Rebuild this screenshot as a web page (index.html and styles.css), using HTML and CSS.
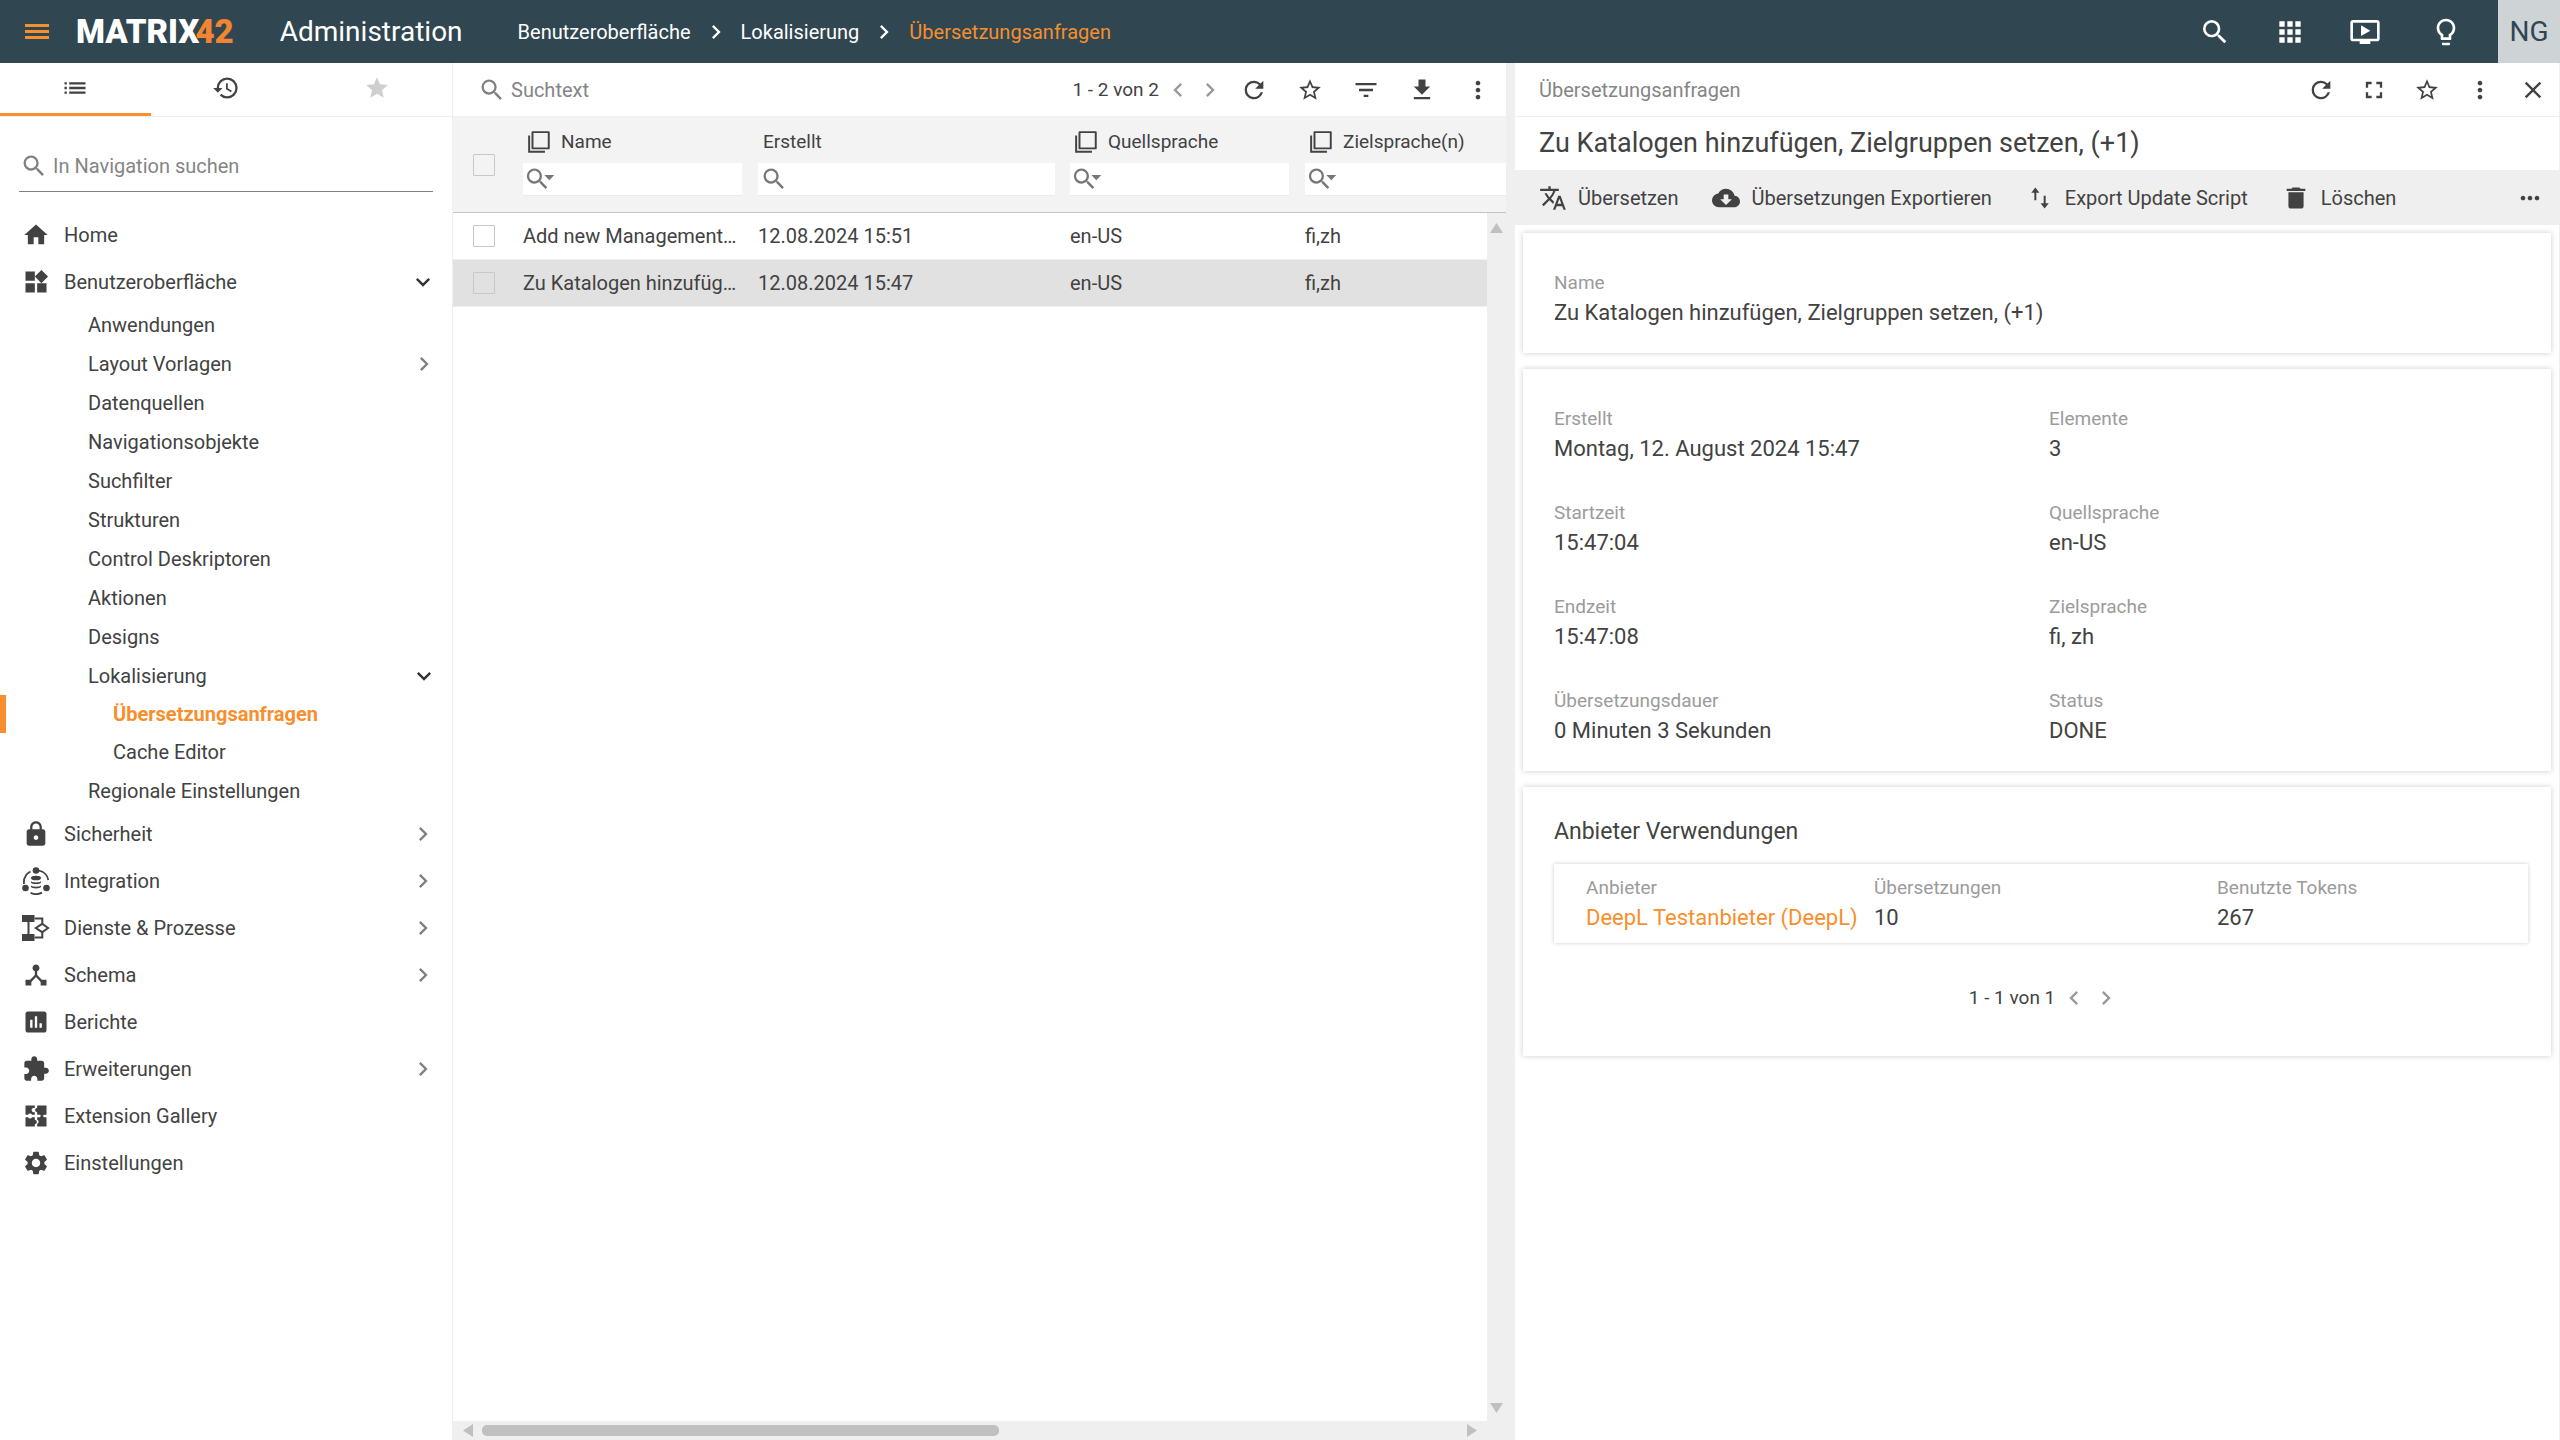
FILE: index.html
```html
<!DOCTYPE html>
<html lang="de">
<head>
<meta charset="utf-8">
<meta name="viewport" content="width=device-width, initial-scale=1">
<title>Administration – Übersetzungsanfragen</title>
<link rel="stylesheet" href="styles.css">
</head>
<body>
<svg class="sprite" aria-hidden="true">
  <symbol id="i-search" viewBox="0 0 24 24"><path d="M15.5 14h-.79l-.28-.27A6.47 6.47 0 0 0 16 9.5 6.5 6.5 0 1 0 9.5 16c1.61 0 3.09-.59 4.23-1.57l.27.28v.79l5 4.99L20.49 19l-4.99-5zm-6 0C7.01 14 5 11.99 5 9.5S7.01 5 9.5 5 14 7.01 14 9.5 11.99 14 9.5 14z"/></symbol>
  <symbol id="i-apps" viewBox="0 0 24 24"><path d="M4 8h4V4H4v4zm6 12h4v-4h-4v4zm-6 0h4v-4H4v4zm0-6h4v-4H4v4zm6 0h4v-4h-4v4zm6-10v4h4V4h-4zm-6 4h4V4h-4v4zm6 6h4v-4h-4v4zm0 6h4v-4h-4v4z"/></symbol>
  <symbol id="i-tv" viewBox="0 0 24 24"><path d="M21 3H3c-1.11 0-2 .89-2 2v12c0 1.1.89 2 2 2h5v2h8v-2h5c1.1 0 1.99-.9 1.99-2L23 5c0-1.11-.9-2-2-2zm0 14H3V5h18v12zm-5-6l-7 4V7z"/></symbol>
  <symbol id="i-bulb" viewBox="0 0 24 24"><path d="M9 21c0 .55.45 1 1 1h4c.55 0 1-.45 1-1v-1H9v1zm3-19C8.14 2 5 5.14 5 9c0 2.38 1.19 4.47 3 5.74V17c0 .55.45 1 1 1h6c.55 0 1-.45 1-1v-2.26c1.81-1.27 3-3.36 3-5.74 0-3.86-3.14-7-7-7zm2.85 11.1l-.85.6V16h-4v-2.3l-.85-.6C7.8 12.16 7 10.63 7 9c0-2.76 2.24-5 5-5s5 2.24 5 5c0 1.63-.8 3.16-2.15 4.1z"/></symbol>
  <symbol id="i-right" viewBox="0 0 24 24"><path d="M10 6L8.59 7.41 13.17 12l-4.58 4.59L10 18l6-6z"/></symbol>
  <symbol id="i-left" viewBox="0 0 24 24"><path d="M15.41 7.41L14 6l-6 6 6 6 1.41-1.41L10.83 12z"/></symbol>
  <symbol id="i-down" viewBox="0 0 24 24"><path d="M16.59 8.59L12 13.17 7.41 8.59 6 10l6 6 6-6z"/></symbol>
  <symbol id="i-list" viewBox="0 0 24 24"><path d="M3 13h2v-2H3v2zm0 4h2v-2H3v2zm0-8h2V7H3v2zm4 4h14v-2H7v2zm0 4h14v-2H7v2zM7 7v2h14V7H7z"/></symbol>
  <symbol id="i-history" viewBox="0 0 24 24"><path d="M13 3a9 9 0 0 0-9 9H1l3.89 3.89.07.14L9 12H6c0-3.87 3.13-7 7-7s7 3.13 7 7-3.13 7-7 7c-1.93 0-3.68-.79-4.94-2.06l-1.42 1.42A8.954 8.954 0 0 0 13 21a9 9 0 0 0 0-18zm-1 5v5l4.28 2.54.72-1.21-3.5-2.08V8H12z"/></symbol>
  <symbol id="i-star" viewBox="0 0 24 24"><path d="M12 17.27L18.18 21l-1.64-7.03L22 9.24l-7.19-.61L12 2 9.19 8.63 2 9.24l5.46 4.73L5.82 21z"/></symbol>
  <symbol id="i-star-o" viewBox="0 0 24 24"><path d="M22 9.24l-7.19-.62L12 2 9.19 8.63 2 9.24l5.46 4.73L5.82 21 12 17.27 18.18 21l-1.63-7.03L22 9.24zM12 15.4l-3.76 2.27 1-4.28-3.32-2.88 4.38-.38L12 6.1l1.71 4.04 4.38.38-3.32 2.88 1 4.28L12 15.4z"/></symbol>
  <symbol id="i-home" viewBox="0 0 24 24"><path d="M10 20v-6h4v6h5v-8h3L12 3 2 12h3v8z"/></symbol>
  <symbol id="i-widgets" viewBox="0 0 24 24"><path d="M13 13v8h8v-8h-8zM3 21h8v-8H3v8zM3 3v8h8V3H3zm13.66-1.31L11 7.34 16.66 13l5.66-5.66-5.66-5.65z"/></symbol>
  <symbol id="i-lock" viewBox="0 0 24 24"><path d="M18 8h-1V6c0-2.76-2.24-5-5-5S7 3.24 7 6v2H6c-1.1 0-2 .9-2 2v10c0 1.1.9 2 2 2h12c1.1 0 2-.9 2-2V10c0-1.1-.9-2-2-2zm-6 9c-1.1 0-2-.9-2-2s.9-2 2-2 2 .9 2 2-.9 2-2 2zm3.100-9H8.900V6c0-1.710 1.390-3.100 3.100-3.100s3.100 1.390 3.100 3.100v2z"/></symbol>
  <symbol id="i-integration" viewBox="0 0 28 28"><circle cx="14" cy="3.500" r="3.300"/><circle cx="3.500" cy="21" r="3.300"/><circle cx="24.500" cy="21" r="3.300"/><path d="M17 3.600A11.500 11.500 0 0 1 26.300 13M8.500 4.500A12.500 12.500 0 0 0 2 17M8.500 25.800A12.500 12.500 0 0 0 20 25.600" fill="none" stroke="currentColor" stroke-width="1.800"/><ellipse cx="14" cy="11" rx="5" ry="2.300"/><path d="M9 14.200c1.500 1.600 8.500 1.600 10 0v1.200c-.5 2.100-9.500 2.100-10 0zM9 18.600c1.500 1.600 8.500 1.600 10 0v1.200c-.5 2.100-9.500 2.100-10 0z"/></symbol>
  <symbol id="i-process" viewBox="0 0 28 28"><path d="M0 1h12.500v7H0zM0 20h12.500v7H0z"/><path d="M6.500 8v12M12.500 4.500h7.800v4.800M12.500 23.500h7.800v-4.800M13.800 14l6.400-4.200L26 14l-5.800 4.200z" fill="none" stroke="currentColor" stroke-width="2"/></symbol>
  <symbol id="i-schema" viewBox="0 0 24 24"><path d="M17 16l-4-4V8.820C14.160 8.400 15 7.300 15 6c0-1.660-1.340-3-3-3S9 4.340 9 6c0 1.300.84 2.400 2 2.820V12l-4 4H3v5h5v-3.050l4-4.200 4 4.200V21h5v-5h-4z"/></symbol>
  <symbol id="i-report" viewBox="0 0 24 24"><path d="M19 3H5c-1.100 0-2 .9-2 2v14c0 1.100.9 2 2 2h14c1.100 0 2-.9 2-2V5c0-1.100-.9-2-2-2zM9 17H7v-7h2v7zm4 0h-2V7h2v10zm4 0h-2v-4h2v4z"/></symbol>
  <symbol id="i-extension" viewBox="0 0 24 24"><path d="M20.500 11H19V7c0-1.100-.9-2-2-2h-4V3.500C13 2.120 11.880 1 10.500 1S8 2.120 8 3.500V5H4c-1.100 0-1.990.9-1.990 2v3.800H3.500c1.490 0 2.700 1.210 2.700 2.700s-1.210 2.700-2.700 2.700H2V20c0 1.100.9 2 2 2h3.800v-1.500c0-1.490 1.210-2.700 2.700-2.700 1.490 0 2.700 1.210 2.700 2.700V22H17c1.100 0 2-.9 2-2v-4h1.500c1.380 0 2.500-1.120 2.500-2.500S21.880 11 20.500 11z"/></symbol>
  <symbol id="i-gallery" viewBox="0 0 24 24"><path d="M3 3h8v2.200a1.900 1.900 0 1 0 0 3.400V11H8.600a1.900 1.900 0 0 0-3.400 0H3zM13 3h8v8h-2.200a1.900 1.900 0 0 1-3.400 0H13V8.800a2 2 0 0 1-1.800-1.900A2 2 0 0 1 13 5zM3 13h2.200a1.900 1.900 0 0 0 3.400 0H11v2.200a2 2 0 0 1 1.800 1.900A2 2 0 0 1 11 19v2H3zM13 13h2.200a1.900 1.900 0 0 1 3.600 0H21v8h-8v-2.200a1.900 1.900 0 0 0 0-3.600z"/></symbol>
  <symbol id="i-gear" viewBox="0 0 24 24"><path d="M19.140 12.940c.04-.3.060-.61.060-.94 0-.32-.02-.64-.07-.94l2.030-1.580a.49.49 0 0 0 .12-.61l-1.920-3.320a.488.488 0 0 0-.59-.22l-2.390.96c-.5-.38-1.030-.7-1.620-.94l-.36-2.540a.484.484 0 0 0-.48-.41h-3.840c-.24 0-.43.17-.47.41l-.36 2.540c-.59.24-1.130.57-1.620.94l-2.390-.96c-.22-.08-.47 0-.59.22L2.740 8.870c-.12.21-.08.47.12.61l2.030 1.580c-.05.3-.09.63-.09.94s.02.64.07.94l-2.030 1.580a.49.49 0 0 0-.12.61l1.920 3.320c.12.22.37.29.59.22l2.390-.96c.5.38 1.030.7 1.620.94l.36 2.540c.05.24.24.41.48.41h3.840c.24 0 .44-.17.47-.41l.36-2.540c.59-.24 1.130-.56 1.620-.94l2.390.96c.22.08.47 0 .59-.22l1.920-3.320c.12-.22.070-.47-.12-.61l-2.010-1.580zM12 15.600c-1.980 0-3.600-1.620-3.600-3.600s1.620-3.600 3.600-3.600 3.600 1.620 3.600 3.600-1.620 3.600-3.600 3.600z"/></symbol>
  <symbol id="i-refresh" viewBox="0 0 24 24"><path d="M17.650 6.350A7.958 7.958 0 0 0 12 4a8 8 0 1 0 7.730 10h-2.080A5.990 5.990 0 0 1 12 18c-3.310 0-6-2.690-6-6s2.690-6 6-6c1.660 0 3.140.69 4.220 1.780L13 11h7V4l-2.350 2.350z"/></symbol>
  <symbol id="i-filter" viewBox="0 0 24 24"><path d="M10 18h4v-2h-4v2zM3 6v2h18V6H3zm3 7h12v-2H6v2z"/></symbol>
  <symbol id="i-download" viewBox="0 0 24 24"><path d="M19 9h-4V3H9v6H5l7 7 7-7zM5 18v2h14v-2H5z"/></symbol>
  <symbol id="i-more" viewBox="0 0 24 24"><path d="M12 8c1.100 0 2-.9 2-2s-.9-2-2-2-2 .9-2 2 .9 2 2 2zm0 2c-1.100 0-2 .9-2 2s.9 2 2 2 2-.9 2-2-.9-2-2-2zm0 6c-1.100 0-2 .9-2 2s.9 2 2 2 2-.9 2-2-.9-2-2-2z"/></symbol>
  <symbol id="i-dots" viewBox="0 0 24 24"><path d="M6 10c-1.100 0-2 .9-2 2s.9 2 2 2 2-.9 2-2-.9-2-2-2zm12 0c-1.100 0-2 .9-2 2s.9 2 2 2 2-.9 2-2-.9-2-2-2zm-6 0c-1.100 0-2 .9-2 2s.9 2 2 2 2-.9 2-2-.9-2-2-2z"/></symbol>
  <symbol id="i-full" viewBox="0 0 24 24"><path d="M7 14H5v5h5v-2H7v-3zm-2-4h2V7h3V5H5v5zm12 7h-3v2h5v-5h-2v3zM14 5v2h3v3h2V5h-5z"/></symbol>
  <symbol id="i-close" viewBox="0 0 24 24"><path d="M19 6.410L17.590 5 12 10.590 6.410 5 5 6.410 10.590 12 5 17.590 6.410 19 12 13.410 17.590 19 19 17.590 13.410 12z"/></symbol>
  <symbol id="i-copy" viewBox="0 0 24 24"><path d="M6 2.900h15v15H6z" fill="none" stroke="currentColor" stroke-width="1.800" stroke-linejoin="round"/><path d="M2.900 6v15H17.500" fill="none" stroke="currentColor" stroke-width="1.800"/></symbol>
  <symbol id="i-searchdown" viewBox="0 0 32 24"><path d="M15.500 14h-.79l-.28-.27A6.470 6.470 0 0 0 16 9.500 6.500 6.500 0 1 0 9.500 16c1.610 0 3.090-.59 4.230-1.570l.27.28v.79l5 4.990L20.490 19l-4.990-5zm-6 0C7.010 14 5 11.990 5 9.500S7.010 5 9.500 5 14 7.010 14 9.500 11.990 14 9.500 14zM18 8.500h8.500L22.250 13z"/></symbol>
  <symbol id="i-translate" viewBox="0 0 24 24"><path d="M12.870 15.070l-2.540-2.510.03-.03A17.520 17.520 0 0 0 14.070 6H17V4h-7V2H8v2H1v1.990h11.170C11.500 7.920 10.440 9.750 9 11.350 8.070 10.320 7.300 9.190 6.690 8h-2c.73 1.630 1.730 3.170 2.980 4.560l-5.090 5.020L4 19l5-5 3.110 3.110.76-2.040zM18.500 10h-2L12 22h2l1.120-3h4.750L21 22h2l-4.500-12zm-2.620 7l1.620-4.330L19.120 17h-3.240z"/></symbol>
  <symbol id="i-cloud" viewBox="0 0 24 24"><path d="M19.350 10.040A7.490 7.490 0 0 0 12 4C9.110 4 6.600 5.640 5.350 8.040A5.994 5.994 0 0 0 0 14c0 3.310 2.690 6 6 6h13c2.760 0 5-2.240 5-5 0-2.640-2.050-4.780-4.650-4.960zM17 13l-5 5-5-5h3V9h4v4h3z"/></symbol>
  <symbol id="i-swap" viewBox="0 0 24 24"><path d="M8 5v9M16 10v9" fill="none" stroke="currentColor" stroke-width="1.700"/><path d="M4.500 7.500L8 3l3.500 4.500zM12.500 16.500L16 21l3.500-4.500z"/></symbol>
  <symbol id="i-trash" viewBox="0 0 24 24"><path d="M5.500 7v12c0 1.100.9 2 2 2h9c1.100 0 2-.9 2-2V7zM20 4h-4l-1.100-1H9.100L8 4H4v2h16z"/></symbol>
</svg>

<header class="topbar">
  <button class="burger" aria-label="Menü"><span></span><span></span><span></span></button>
  <a class="logo" href="#">MATRIX<span class="logo-num">42</span></a>
  <h1 class="app-name">Administration</h1>
  <nav class="crumbs" aria-label="Pfad">
    <a href="#">Benutzeroberfläche</a>
    <svg class="icon"><use href="#i-right"/></svg>
    <a href="#">Lokalisierung</a>
    <svg class="icon"><use href="#i-right"/></svg>
    <a class="current" href="#">Übersetzungsanfragen</a>
  </nav>
  <div class="top-actions">
    <button aria-label="Suche"><svg class="icon-lg"><use href="#i-search"/></svg></button>
    <button aria-label="Anwendungen"><svg class="icon-lg"><use href="#i-apps"/></svg></button>
    <button aria-label="Videos"><svg class="icon-lg"><use href="#i-tv"/></svg></button>
    <button class="help" aria-label="Hilfe"><svg class="icon-lg"><use href="#i-bulb"/></svg></button>
  </div>
  <button class="avatar">NG</button>
</header>

<div class="workspace">
  <aside class="sidebar">
    <div class="tabs">
      <button class="tab active" aria-label="Navigation"><svg class="icon"><use href="#i-list"/></svg></button>
      <button class="tab" aria-label="Verlauf"><svg class="icon"><use href="#i-history"/></svg></button>
      <button class="tab muted" aria-label="Favoriten"><svg class="icon-sm"><use href="#i-star"/></svg></button>
    </div>
    <label class="nav-search">
      <svg class="icon"><use href="#i-search"/></svg>
      <input type="text" placeholder="In Navigation suchen">
    </label>
    <nav class="tree" aria-label="Navigation">
      <a class="l1" href="#"><svg class="icon"><use href="#i-home"/></svg><span>Home</span></a>
      <a class="l1" href="#"><svg class="icon"><use href="#i-widgets"/></svg><span>Benutzeroberfläche</span><svg class="icon chev open"><use href="#i-down"/></svg></a>
      <a class="l2" href="#"><span>Anwendungen</span></a>
      <a class="l2" href="#"><span>Layout Vorlagen</span><svg class="icon chev"><use href="#i-right"/></svg></a>
      <a class="l2" href="#"><span>Datenquellen</span></a>
      <a class="l2" href="#"><span>Navigationsobjekte</span></a>
      <a class="l2" href="#"><span>Suchfilter</span></a>
      <a class="l2" href="#"><span>Strukturen</span></a>
      <a class="l2" href="#"><span>Control Deskriptoren</span></a>
      <a class="l2" href="#"><span>Aktionen</span></a>
      <a class="l2" href="#"><span>Designs</span></a>
      <a class="l2" href="#"><span>Lokalisierung</span><svg class="icon chev open"><use href="#i-down"/></svg></a>
      <a class="l3 active" href="#"><span>Übersetzungsanfragen</span></a>
      <a class="l3" href="#"><span>Cache Editor</span></a>
      <a class="l2" href="#"><span>Regionale Einstellungen</span></a>
      <a class="l1" href="#"><svg class="icon"><use href="#i-lock"/></svg><span>Sicherheit</span><svg class="icon chev"><use href="#i-right"/></svg></a>
      <a class="l1" href="#"><svg class="icon"><use href="#i-integration"/></svg><span>Integration</span><svg class="icon chev"><use href="#i-right"/></svg></a>
      <a class="l1" href="#"><svg class="icon"><use href="#i-process"/></svg><span>Dienste &amp; Prozesse</span><svg class="icon chev"><use href="#i-right"/></svg></a>
      <a class="l1" href="#"><svg class="icon"><use href="#i-schema"/></svg><span>Schema</span><svg class="icon chev"><use href="#i-right"/></svg></a>
      <a class="l1" href="#"><svg class="icon"><use href="#i-report"/></svg><span>Berichte</span></a>
      <a class="l1" href="#"><svg class="icon"><use href="#i-extension"/></svg><span>Erweiterungen</span><svg class="icon chev"><use href="#i-right"/></svg></a>
      <a class="l1" href="#"><svg class="icon"><use href="#i-gallery"/></svg><span>Extension Gallery</span></a>
      <a class="l1" href="#"><svg class="icon"><use href="#i-gear"/></svg><span>Einstellungen</span></a>
    </nav>
  </aside>

  <main class="list">
    <div class="bar list-bar">
      <label class="list-search">
        <svg class="icon"><use href="#i-search"/></svg>
        <input type="text" placeholder="Suchtext">
      </label>
      <div class="pager">
        <span>1 - 2 von 2</span>
        <button aria-label="Zurück"><svg class="icon"><use href="#i-left"/></svg></button>
        <button aria-label="Weiter"><svg class="icon"><use href="#i-right"/></svg></button>
      </div>
      <div class="bar-actions">
        <button aria-label="Aktualisieren"><svg class="icon"><use href="#i-refresh"/></svg></button>
        <button aria-label="Favorit"><svg class="icon-sm"><use href="#i-star-o"/></svg></button>
        <button aria-label="Filter"><svg class="icon"><use href="#i-filter"/></svg></button>
        <button aria-label="Herunterladen"><svg class="icon"><use href="#i-download"/></svg></button>
        <button aria-label="Mehr"><svg class="icon"><use href="#i-more"/></svg></button>
      </div>
    </div>
    <div class="grid">
      <table class="rows">
        <colgroup><col class="c-check"><col class="c-std"><col class="c-date"><col class="c-std"><col class="c-std"></colgroup>
        <thead>
          <tr>
            <th class="check"><input type="checkbox" aria-label="Alle auswählen"></th>
            <th><div class="head"><svg class="icon-copy"><use href="#i-copy"/></svg>Name</div><label class="filter"><svg class="icon-wide"><use href="#i-searchdown"/></svg><input type="text" aria-label="Name filtern"></label></th>
            <th class="flush"><div class="head plain">Erstellt</div><label class="filter"><svg class="icon"><use href="#i-search"/></svg><input type="text" aria-label="Erstellt filtern"></label></th>
            <th><div class="head"><svg class="icon-copy"><use href="#i-copy"/></svg>Quellsprache</div><label class="filter"><svg class="icon-wide"><use href="#i-searchdown"/></svg><input type="text" aria-label="Quellsprache filtern"></label></th>
            <th><div class="head"><svg class="icon-copy"><use href="#i-copy"/></svg>Zielsprache(n)</div><label class="filter"><svg class="icon-wide"><use href="#i-searchdown"/></svg><input type="text" aria-label="Zielsprachen filtern"></label></th>
          </tr>
        </thead>
        <tbody>
          <tr><td class="check"><input type="checkbox" aria-label="Zeile auswählen"></td><td>Add new Management…</td><td>12.08.2024 15:51</td><td>en-US</td><td>fi,zh</td></tr>
          <tr class="selected"><td class="check"><input type="checkbox" aria-label="Zeile auswählen"></td><td>Zu Katalogen hinzufüg…</td><td>12.08.2024 15:47</td><td>en-US</td><td>fi,zh</td></tr>
        </tbody>
      </table>
      <div class="vscroll" aria-hidden="true"><span class="arrow up"></span><span class="arrow down"></span></div>
    </div>
    <div class="hscroll" aria-hidden="true"><span class="arrow left"></span><div class="track"><span class="thumb"></span></div><span class="arrow right"></span></div>
  </main>

  <div class="splitter"></div>

  <section class="detail">
    <div class="bar detail-bar">
      <span class="kind">Übersetzungsanfragen</span>
      <div class="bar-actions">
        <button aria-label="Aktualisieren"><svg class="icon"><use href="#i-refresh"/></svg></button>
        <button aria-label="Vollbild"><svg class="icon"><use href="#i-full"/></svg></button>
        <button aria-label="Favorit"><svg class="icon-sm"><use href="#i-star-o"/></svg></button>
        <button aria-label="Mehr"><svg class="icon"><use href="#i-more"/></svg></button>
        <button aria-label="Schließen"><svg class="icon"><use href="#i-close"/></svg></button>
      </div>
    </div>
    <h2 class="title">Zu Katalogen hinzufügen, Zielgruppen setzen, (+1)</h2>
    <div class="commands">
      <button><svg class="icon"><use href="#i-translate"/></svg>Übersetzen</button>
      <button><svg class="icon"><use href="#i-cloud"/></svg>Übersetzungen Exportieren</button>
      <button><svg class="icon"><use href="#i-swap"/></svg>Export Update Script</button>
      <button><svg class="icon"><use href="#i-trash"/></svg>Löschen</button>
      <button class="more" aria-label="Weitere Aktionen"><svg class="icon"><use href="#i-dots"/></svg></button>
    </div>
    <div class="cards">
      <dl class="card fields">
        <div><dt>Name</dt><dd>Zu Katalogen hinzufügen, Zielgruppen setzen, (+1)</dd></div>
      </dl>
      <dl class="card fields two">
        <div><dt>Erstellt</dt><dd>Montag, 12. August 2024 15:47</dd></div>
        <div><dt>Elemente</dt><dd>3</dd></div>
        <div><dt>Startzeit</dt><dd>15:47:04</dd></div>
        <div><dt>Quellsprache</dt><dd>en-US</dd></div>
        <div><dt>Endzeit</dt><dd>15:47:08</dd></div>
        <div><dt>Zielsprache</dt><dd>fi, zh</dd></div>
        <div><dt>Übersetzungsdauer</dt><dd>0 Minuten 3 Sekunden</dd></div>
        <div><dt>Status</dt><dd>DONE</dd></div>
      </dl>
      <section class="card usage">
        <h3>Anbieter Verwendungen</h3>
        <table class="usage-table">
          <colgroup><col class="u1"><col class="u2"><col></colgroup>
          <thead><tr><th>Anbieter</th><th>Übersetzungen</th><th>Benutzte Tokens</th></tr></thead>
          <tbody><tr><td><a href="#">DeepL Testanbieter (DeepL)</a></td><td>10</td><td>267</td></tr></tbody>
        </table>
        <div class="pager">
          <span>1 - 1 von 1</span>
          <button aria-label="Zurück"><svg class="icon"><use href="#i-left"/></svg></button>
          <button aria-label="Weiter"><svg class="icon"><use href="#i-right"/></svg></button>
        </div>
      </section>
    </div>
  </section>
</div>
</body>
</html>
```
FILE: styles.css
```css
:root {
  --ink: #424242;
  --muted: #9b9b9b;
  --line: #efefef;
  --orange: #f78f2e;
  --navy: #304650;
}

* { box-sizing: border-box; }

body {
  margin: 0;
  height: 100vh;
  display: flex;
  flex-direction: column;
  background: #fff;
  color: var(--ink);
  font: 20px/24px Roboto, "Liberation Sans", sans-serif;
}

h1, h2, h3, dl, dd { margin: 0; font-weight: 400; }
a { color: inherit; text-decoration: none; }
button { padding: 0; border: 0; background: none; color: inherit; font: inherit; cursor: pointer; }
input { min-width: 0; margin: 0; padding: 0; border: 0; outline: 0; background: none; color: inherit; font: inherit; }
input::placeholder { color: #858585; opacity: 1; }

svg { display: block; flex: none; fill: currentColor; }
.sprite { position: absolute; width: 0; height: 0; }
.icon { width: 28px; height: 28px; }
.icon-sm { width: 26px; height: 26px; }
.icon-lg { width: 32px; height: 32px; }
.icon-copy { width: 26px; height: 26px; }
.icon-wide { width: 38px; height: 28px; }

/* Top bar */
.topbar {
  display: flex;
  align-items: center;
  height: 63px;
  flex: none;
  padding-left: 25px;
  background: var(--navy);
  color: #fff;
}
.burger { display: flex; flex-direction: column; gap: 3px; width: 24px; }
.burger span { height: 3px; background: var(--orange); }
.logo { margin-left: 27px; font-size: 33px; line-height: 32px; font-weight: 900; }
.logo-num { margin-left: -4px; color: #f18530; }
.app-name { margin-left: 46px; font-size: 28px; line-height: 32px; }
.crumbs { display: flex; align-items: center; gap: 11px; margin-left: 55px; }
.crumbs .current { color: var(--orange); }
.top-actions { display: flex; gap: 43px; margin-left: auto; }
.top-actions .help { display: grid; place-items: center; width: 44px; }
.avatar {
  width: 62px;
  height: 63px;
  margin-left: 30px;
  background: #ced3d6;
  color: var(--navy);
  font-size: 28px;
}

.workspace {
  flex: 1;
  min-height: 0;
  display: grid;
  grid-template-columns: 453px minmax(0, 1053fr) 9px minmax(0, 1045fr);
}

/* Navigation */
.sidebar { border-right: 1px solid var(--line); }
.tabs { display: grid; grid-template-columns: repeat(3, 1fr); height: 54px; border-bottom: 1px solid var(--line); }
.tab { display: grid; place-items: center; border-bottom: 3px solid transparent; }
.tab.active { border-color: var(--orange); }
.tab.muted { color: #cfcfcf; }
.nav-search {
  display: flex;
  align-items: center;
  gap: 5px;
  height: 51px;
  margin: 24px 19px 19px;
  padding-left: 1px;
  border-bottom: 1px solid #808080;
  color: #808080;
}
.nav-search input, .list-search input { flex: 1; }

.tree a { display: flex; align-items: center; }
.tree .l1 { height: 47px; padding: 0 15px 0 22px; gap: 14px; }
.tree .l2 { height: 39px; padding: 0 14px 0 88px; }
.tree .l3 { height: 38px; padding-left: 107px; border-left: 6px solid transparent; }
.tree .l3.active { border-color: var(--orange); color: var(--orange); font-weight: 700; }
.chev { margin-left: auto; color: #808080; }
.chev.open { color: #333; }

/* Shared bars */
.bar { display: flex; align-items: center; height: 54px; border-bottom: 1px solid var(--line); }
.bar-actions { display: flex; }
.bar-actions button { display: grid; place-items: center; width: 56px; height: 40px; }
.pager { display: flex; align-items: center; }
.pager span { margin-right: 3px; font-size: 19px; }
.pager button { width: 32px; height: 28px; color: #999; display: grid; place-items: center; }

/* Record list */
.list { display: flex; flex-direction: column; min-width: 0; }
.list-search { flex: 1; display: flex; align-items: center; gap: 5px; padding-left: 25px; color: #808080; }
.grid { position: relative; flex: 1; overflow: hidden; }
.rows { width: 1072px; table-layout: fixed; border-collapse: separate; border-spacing: 0; }
.c-check { width: 55px; }
.c-std { width: 235px; }
.c-date { width: 312px; }
.rows th {
  height: 96px;
  padding: 8px 1px 0 15px;
  background: #f3f3f3;
  border-bottom: 1px solid #c4c4c4;
  vertical-align: top;
  text-align: left;
  font-size: 19px;
  font-weight: 400;
}
.rows th.flush { padding-right: 0; }
.rows td {
  height: 47px;
  padding: 0 1px 0 15px;
  border-bottom: 1px solid #f0f0f0;
  white-space: nowrap;
  overflow: hidden;
  text-overflow: ellipsis;
}
.rows .selected td { background: #e1e1e1; }
.rows .check { padding: 0 0 0 20px; vertical-align: middle; }
.check input {
  display: block;
  appearance: none;
  width: 22px;
  height: 22px;
  border: 1px solid #c8c8c8;
  border-radius: 1px;
}
.head { display: flex; align-items: center; gap: 9px; height: 34px; padding-left: 3px; }
.head.plain { padding-left: 5px; }
.filter { display: flex; align-items: center; height: 33px; margin-top: 4px; background: #fff; border-bottom: 1px solid #ebebeb; color: #777; }
.filter .icon { margin-left: 2px; }
.filter input { flex: 1; }

.vscroll {
  position: absolute;
  top: 96px;
  right: 0;
  bottom: 0;
  width: 19px;
  padding: 10px 3px 8px;
  display: flex;
  flex-direction: column;
  justify-content: space-between;
  background: var(--line);
}
.hscroll { display: flex; align-items: center; height: 19px; padding: 0 29px 0 10px; background: var(--line); }
.track { flex: 1; margin: 0 9px; }
.thumb { display: block; width: 53%; height: 11px; border-radius: 5px; background: #c0c0c0; }
.arrow { flex: none; background: #c0c0c0; }
.arrow.up, .arrow.down { width: 13px; height: 10px; }
.arrow.left, .arrow.right { width: 10px; height: 13px; }
.arrow.up { clip-path: polygon(50% 0, 100% 100%, 0 100%); }
.arrow.down { clip-path: polygon(0 0, 100% 0, 50% 100%); }
.arrow.left { clip-path: polygon(0 50%, 100% 0, 100% 100%); }
.arrow.right { clip-path: polygon(0 0, 100% 50%, 0 100%); }

.splitter { background: var(--line); }

/* Detail pane */
.detail { min-width: 0; border-right: 1px solid var(--line); }
.detail-bar { padding-left: 24px; justify-content: space-between; }
.kind { color: #858585; }
.detail-bar .bar-actions button { width: 53px; }
.title { padding: 10px 24px; font-size: 27px; line-height: 33px; }
.commands { display: flex; align-items: center; gap: 34px; height: 55px; padding: 0 15px 0 24px; background: var(--line); }
.commands button { display: flex; align-items: center; gap: 11px; }
.commands .more { margin-left: auto; }

.cards { display: flex; flex-direction: column; gap: 16px; padding: 8px; }
.card { background: #fff; box-shadow: 0 0 6px rgba(0, 0, 0, .2); }
.fields { display: grid; padding: 38px 31px 22px; row-gap: 34px; }
.fields.two { grid-template-columns: 1fr 1fr; column-gap: 24px; }
dt, .usage-table th { color: var(--muted); font-size: 19px; line-height: 24px; }
dd, .usage-table td { font-size: 22px; line-height: 36px; }
.usage { padding: 29px 23px 44px 31px; }
.usage h3 { font-size: 23px; line-height: 32px; }
.usage-table {
  width: 100%;
  margin-top: 16px;
  padding: 12px 0 7px 32px;
  table-layout: fixed;
  border-spacing: 0;
  box-shadow: 0 0 4px rgba(0, 0, 0, .2);
}
.usage-table th, .usage-table td { padding: 0; text-align: left; font-weight: 400; }
.u1 { width: 288px; }
.u2 { width: 343px; }
.usage-table a { color: var(--orange); }
.usage .pager { justify-content: center; margin-top: 41px; padding-left: 9px; }
```
